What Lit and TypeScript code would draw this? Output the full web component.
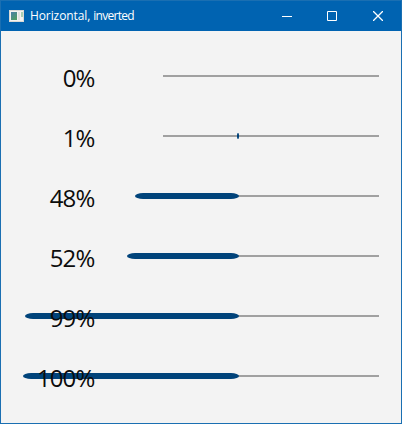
import { LitElement, html, css } from "lit";
import { customElement, property } from "lit/decorators.js";
import { styleMap } from "lit/directives/style-map.js";

const TRACK_WIDTH = 216;

@customElement("progress-row")
class ProgressRow extends LitElement {
  @property({ type: Number }) value = 0;

  static styles = css`
    :host {
      display: flex;
      align-items: center;
      height: 60px;
    }
    .track {
      order: 2;
      position: relative;
      width: 216px;
      height: 2px;
      margin-left: 68.5px;
      background: #a0a0a0;
    }
    .fill {
      position: absolute;
      top: -2px;
      right: 140px;
      height: 6px;
      background: #00437a;
      border-radius: 8px / 3px;
    }
    .fill.tiny {
      border-radius: 1px / 2px;
    }
    .label {
      order: 1;
      position: relative;
      width: 93.5px;
      text-align: right;
      white-space: nowrap;
      font: 24px/32px "Open Sans", "Noto Sans", sans-serif;
      letter-spacing: -0.85px;
      color: #0c0c0c;
      z-index: 1;
      padding-top: 4px;
    }
  `;

  render() {
    const width = Math.round((this.value / 100) * TRACK_WIDTH);
    return html`
      <div class="label">${this.value}%</div>
      <div class="track">
        ${width
          ? html`<div
              class="fill ${width < 8 ? "tiny" : ""}"
              style=${styleMap({ width: `${width}px` })}
            ></div>`
          : null}
      </div>
    `;
  }
}

@customElement("app-root")
class AppRoot extends LitElement {
  static styles = css`
    :host {
      display: flex;
      flex-direction: column;
      box-sizing: border-box;
      width: 402px;
      height: 424px;
      border: 1px solid #1a6fb2;
      background: #f3f3f3;
      overflow: hidden;
    }
    .titlebar {
      display: flex;
      align-items: center;
      height: 30px;
      flex: none;
      background: #0063b1;
      color: #fff;
    }
    .icon {
      margin-left: 8px;
      flex: none;
    }
    .title {
      flex: 1;
      margin-left: 5px;
      white-space: nowrap;
      font: 12px/16px "Open Sans", "Noto Sans", sans-serif;
      letter-spacing: -0.1px;
    }
    .second {
      letter-spacing: -0.7px;
    }
    .control {
      display: flex;
      flex: none;
      width: 45px;
      justify-content: center;
    }
    .close {
      width: 47px;
    }
    .rows {
      display: flex;
      flex-direction: column;
      padding-top: 15px;
    }
  `;

  render() {
    return html`
      <div class="titlebar">
        <svg class="icon" width="16" height="14" viewBox="0 0 16 14">
          <defs>
            <linearGradient id="pane" x1="0" y1="0" x2="0.6" y2="1">
              <stop offset="0" stop-color="#4a7fa8" />
              <stop offset="1" stop-color="#4f9b66" />
            </linearGradient>
          </defs>
          <rect x="0" y="1" width="15" height="12" fill="#d9d9d5" />
          <rect x="1" y="2" width="13" height="10" fill="#f3f3f1" />
          <rect x="2" y="3" width="6" height="8" fill="url(#pane)" />
          <rect x="9" y="3" width="2" height="8" fill="#e2e2df" />
          <rect x="12" y="3" width="2" height="5" fill="#a9cfb4" />
        </svg>
        <div class="title">Horizontal, <span class="second">inverted</span></div>
        <div class="control">
          <svg width="10" height="10" viewBox="0 0 10 10">
            <path d="M0 5.5H10" stroke="#fff" />
          </svg>
        </div>
        <div class="control">
          <svg width="10" height="10" viewBox="0 0 10 10">
            <path d="M.5 .5H9.5V9.5H.5Z" fill="none" stroke="#fff" />
          </svg>
        </div>
        <div class="control close">
          <svg width="10" height="10" viewBox="0 0 10 10">
            <path d="M0 0L10 10M10 0L0 10" stroke="#fff" stroke-width="1.3" />
          </svg>
        </div>
      </div>
      <div class="rows">
        ${[0, 1, 48, 52, 99, 100].map(
          (v) => html`<progress-row .value=${v}></progress-row>`
        )}
      </div>
    `;
  }
}
